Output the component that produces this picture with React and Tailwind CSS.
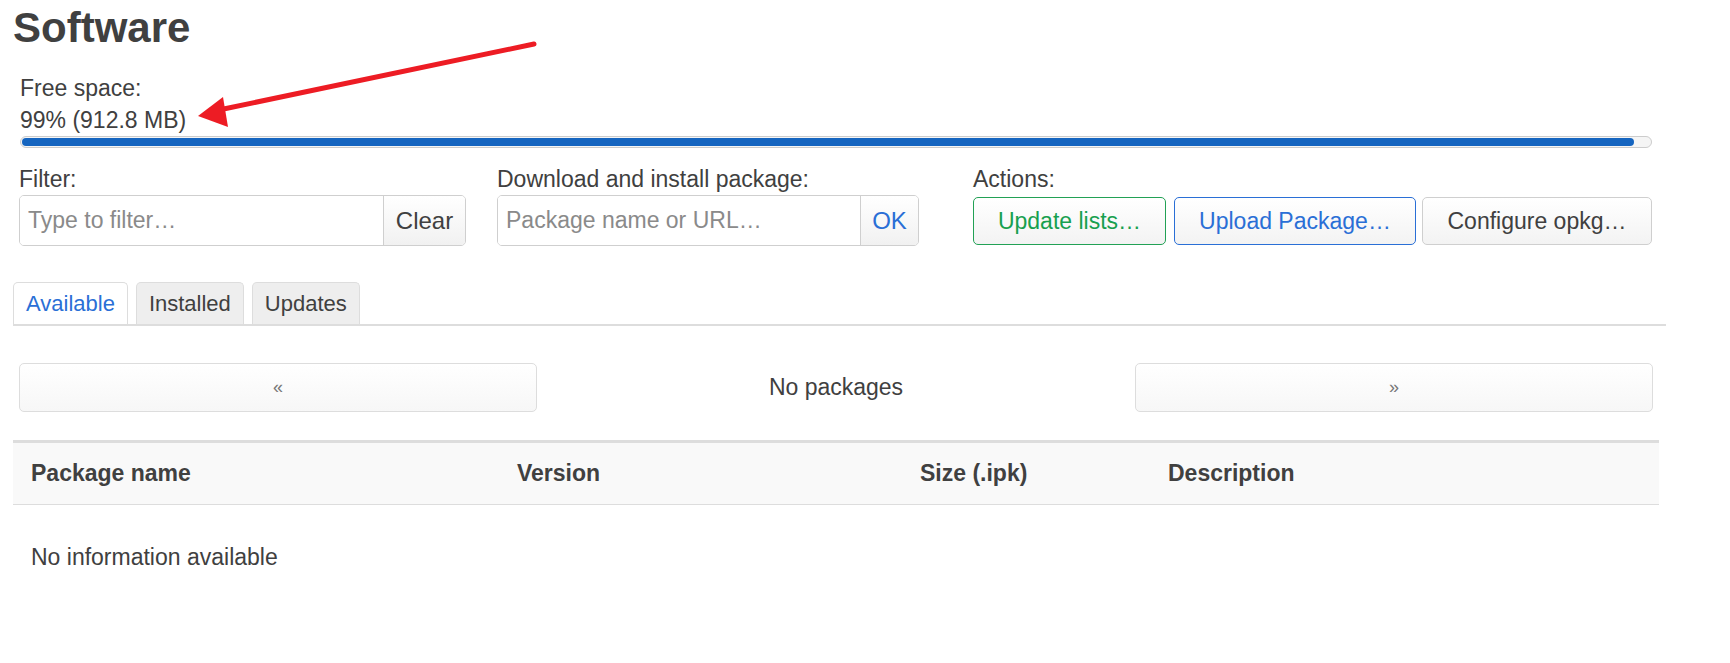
const COLUMNS = ['Package name', 'Version', 'Size (.ipk)', 'Description'];

const TABS = [
    { label: 'Available', active: true },
    { label: 'Installed', active: false },
    { label: 'Updates', active: false },
];

const btnBase =
    'h-[48px] rounded-[5px] border bg-gradient-to-b from-white to-[#f3f3f3] text-[23px] leading-none';

const InputGroup = ({ placeholder, action, width, actionWidth, actionClass }) => (
    <div className={`flex h-[51px] rounded-[5px] border border-[#cfcfcf] overflow-hidden ${width}`}>
        <input
            className="flex-1 min-w-0 px-[8px] text-[23px] text-[#404040] placeholder:text-[#8a8a8a] outline-none bg-white"
            placeholder={placeholder}
        />
        <button
            className={`${actionWidth} border-l border-[#cfcfcf] bg-gradient-to-b from-white to-[#f1f1f1] text-[24px] ${actionClass}`}
        >
            {action}
        </button>
    </div>
);

const App = () => {
    return (
        <div className="relative w-[1730px] h-[663px] bg-white text-[#404040] font-['Liberation_Sans',Arial,sans-serif] overflow-hidden">
            <div className="pl-[13px]">
                <h2 className="pt-[5px] text-[42px] leading-[46px] font-bold text-[#404040]">Software</h2>

                <div className="ml-[7px] w-[1632px] mt-[21px]">
                    <div className="text-[23px] leading-[33px]">Free space:</div>
                    <div className="text-[23px] leading-[31px]">99% (912.8 MB)</div>
                    <div className="h-[12px] rounded-full border border-[#cccccc] bg-[#f5f5f5] p-[1px]">
                        <div className="h-full w-[99%] rounded-full bg-[#1565c0]" />
                    </div>
                </div>

                <div className="flex mt-[16px] ml-[6px]">
                    <div className="w-[478px]">
                        <div className="text-[23px] leading-[31px]">Filter:</div>
                        <InputGroup
                            placeholder="Type to filter…"
                            action="Clear"
                            width="w-[447px]"
                            actionWidth="w-[82px]"
                            actionClass="text-[#404040]"
                        />
                    </div>
                    <div className="w-[476px]">
                        <div className="text-[23px] leading-[31px]">Download and install package:</div>
                        <InputGroup
                            placeholder="Package name or URL…"
                            action="OK"
                            width="w-[422px]"
                            actionWidth="w-[58px]"
                            actionClass="text-[#2a6fd6]"
                        />
                    </div>
                    <div>
                        <div className="text-[23px] leading-[31px]">Actions:</div>
                        <div className="flex gap-[7px] mt-[2px]">
                            <button className={`${btnBase} w-[193px] border-[#22a155] text-[#17a04f]`}>
                                Update lists…
                            </button>
                            <button className={`${btnBase} w-[242px] border-[#2a6fd6] text-[#2a6fd6] ml-[1px]`}>
                                Upload Package…
                            </button>
                            <button className={`${btnBase} w-[230px] border-[#cfcfcf] text-[#404040] -ml-[1px]`}>
                                Configure opkg…
                            </button>
                        </div>
                    </div>
                </div>

                <div className="mt-[36px] w-[1653px] flex gap-[8px] border-b-2 border-[#dddddd]">
                    {TABS.map((tab) => (
                        <div
                            key={tab.label}
                            className={`h-[42px] px-[12px] flex items-center rounded-t-[5px] border border-b-0 border-[#dddddd] text-[22px] ${
                                tab.active ? 'bg-white text-[#2a6fd6]' : 'bg-[#eeeeee] text-[#404040]'
                            }`}
                        >
                            {tab.label}
                        </div>
                    ))}
                </div>

                <div className="mt-[37px] ml-[6px] w-[1634px] flex items-center">
                    <button className="w-[518px] h-[49px] rounded-[5px] border border-[#dddddd] bg-gradient-to-b from-white to-[#f7f7f7] text-[18px] text-[#777777]">
                        «
                    </button>
                    <div className="flex-1 text-center text-[23px]">No packages</div>
                    <button className="w-[518px] h-[49px] rounded-[5px] border border-[#dddddd] bg-gradient-to-b from-white to-[#f7f7f7] text-[18px] text-[#777777]">
                        »
                    </button>
                </div>

                <div className="mt-[28px] w-[1646px]">
                    <div className="grid grid-cols-[486px_403px_248px_1fr] h-[65px] items-center bg-[#f9f9f9] border-t-[3px] border-b border-[#dddddd]">
                        {COLUMNS.map((col) => (
                            <div key={col} className="pl-[18px] text-[23px] font-bold">
                                {col}
                            </div>
                        ))}
                    </div>
                    <div className="pl-[18px] pt-[37px] text-[23px] leading-[31px]">No information available</div>
                </div>
            </div>

            <svg
                className="absolute left-0 top-0 pointer-events-none"
                width="1730"
                height="663"
                viewBox="0 0 1730 663"
            >
                <line x1="534" y1="44" x2="214" y2="111" stroke="#ed1c24" strokeWidth="5" strokeLinecap="round" />
                <polygon points="198,116 223,97 228,127" fill="#ed1c24" />
            </svg>
        </div>
    );
};

export default App;
